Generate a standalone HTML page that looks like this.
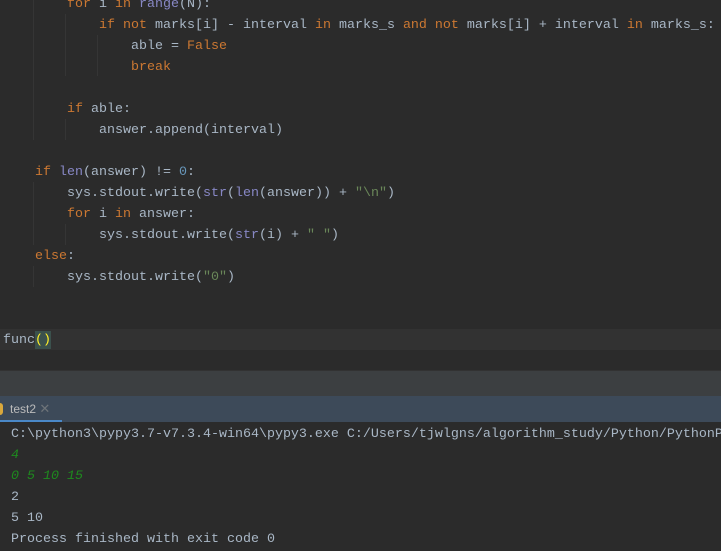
<!DOCTYPE html>
<html><head><style>
html,body{margin:0;padding:0;width:721px;height:551px;overflow:hidden;background:#2b2b2b;}
.m{font-family:"Liberation Mono",monospace;font-size:13.33px;white-space:pre;position:absolute;line-height:21px;color:#a9b7c6;}
.k{color:#cc7832}.s{color:#6a8759}.n{color:#6897bb}.b{color:#8888c6}
.g{position:absolute;width:1px;background:#353535}
</style></head><body>
<div class="g" style="left:33px;top:0;height:140px"></div>
<div class="g" style="left:65px;top:14px;height:62px"></div>
<div class="g" style="left:97px;top:35px;height:41px"></div>
<div class="g" style="left:65px;top:119px;height:21px"></div>
<div class="g" style="left:33px;top:182px;height:63px"></div>
<div class="g" style="left:33px;top:266px;height:21px"></div>
<div class="g" style="left:65px;top:224px;height:21px"></div>
<div style="position:absolute;left:0;top:329px;width:721px;height:21px;background:#323232"></div>
<div style="position:absolute;left:35px;top:331px;width:16px;height:18px;background:#3b514d"></div>
<div class="m" style="left:3px;top:-6px"><span class="k">        for</span> i <span class="k">in</span> <span class="b">range</span>(N):
            <span class="k">if not</span> marks[i] - interval <span class="k">in</span> marks_s <span class="k">and not</span> marks[i] + interval <span class="k">in</span> marks_s:
                able = <span class="k">False</span>
                <span class="k">break</span>

        <span class="k">if</span> able:
            answer.append(interval)

    <span class="k">if</span> <span class="b">len</span>(answer) != <span class="n">0</span>:
        sys.stdout.write(<span class="b">str</span>(<span class="b">len</span>(answer)) + <span class="s">"\n"</span>)
        <span class="k">for</span> i <span class="k">in</span> answer:
            sys.stdout.write(<span class="b">str</span>(i) + <span class="s">" "</span>)
    <span class="k">else</span>:
        sys.stdout.write(<span class="s">"0"</span>)


func<span style="color:#ffef28">()</span></div>
<div style="position:absolute;left:0;top:370px;width:721px;height:1px;background:#323232"></div>
<div style="position:absolute;left:0;top:371px;width:721px;height:25px;background:#3c3f41"></div>
<div style="position:absolute;left:0;top:396px;width:721px;height:26px;background:#3d4a59"></div>
<div style="position:absolute;left:0;top:420px;width:62px;height:2px;background:#4a88c7"></div>
<div style="position:absolute;left:-3px;top:403px;width:6px;height:12px;background:#d9a83c;border-radius:3px"></div>
<div style="position:absolute;left:10px;top:401px;font-family:'Liberation Sans',sans-serif;font-size:12px;color:#bbbbbb">test2 <span style="color:#6e7479;font-size:13px">✕</span></div>
<div class="m" style="left:11px;top:424px">C:\python3\pypy3.7-v7.3.4-win64\pypy3.exe C:/Users/tjwlgns/algorithm_study/Python/PythonPr
<span style="color:#1e8a1e;font-style:italic">4
0 5 10 15</span>
2
5 10
Process finished with exit code 0</div>
</body></html>
